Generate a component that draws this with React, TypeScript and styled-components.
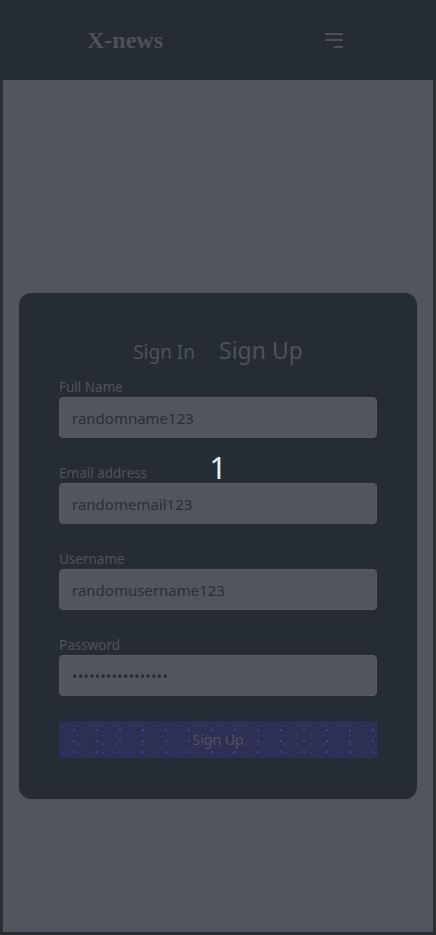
import React from "react";
import styled, { createGlobalStyle } from "styled-components";

const Global = createGlobalStyle`
  html, body { margin: 0; padding: 0; background: #2a2e31; }
  body { font-family: "Noto Sans", "Open Sans", sans-serif; }
  * { box-sizing: border-box; }
`;

const Page = styled.div`
  width: 436px;
  height: 935px;
  display: flex;
  flex-direction: column;
  background: #2a2e31;
  position: relative;
`;

const Header = styled.header`
  height: 80px;
  flex: none;
  background: #262c36;
  display: flex;
  align-items: center;
  justify-content: space-between;
  padding: 0 93px 0 87px;
`;

const Logo = styled.div`
  font-family: "Liberation Serif", "Times New Roman", serif;
  font-weight: 700;
  font-size: 24px;
  color: #4d525a;
`;

const Burger = styled.button`
  width: 18px;
  height: 15px;
  padding: 0;
  border: 0;
  background: transparent;
  display: flex;
  flex-direction: column;
  align-items: flex-end;
  justify-content: space-between;
`;

const Line = styled.span<{ $w: number }>`
  display: block;
  height: 2px;
  width: ${(p) => p.$w}px;
  background: #4d525a;
`;

const Main = styled.main`
  flex: 1;
  margin: 0 3px 3px;
  background: #52555d;
  padding: 213px 16px 0;
`;

const Card = styled.section`
  background: #262c36;
  border-radius: 12px;
  padding: 34px 40px 40px;
  height: 506px;
`;

const Tabs = styled.div`
  display: flex;
  justify-content: center;
  align-items: baseline;
  gap: 24px;
  height: 46px;
  margin-bottom: 6px;
`;

const Tab = styled.span<{ $active?: boolean }>`
  font-size: ${(p) => (p.$active ? "23px" : "19px")};
  color: #4d525a;
  line-height: 46px;
`;

const Field = styled.div`
  display: flex;
  flex-direction: column;
  gap: 2px;
  margin-bottom: 27px;
  &:last-of-type {
    margin-bottom: 25px;
  }
`;

const Label = styled.label`
  font-size: 13.5px;
  line-height: 16px;
  color: #4f535b;
`;

const Input = styled.div`
  height: 41px;
  border-radius: 4px;
  background: #52555d;
  border: 1px solid #575a62;
  color: #2a2f37;
  font-size: 15px;
  display: flex;
  align-items: center;
  padding-left: 12px;
`;

const Button = styled.button`
  width: 100%;
  height: 37px;
  border: 0;
  border-radius: 0;
  background-color: #2e3053;
  background-image:
    radial-gradient(circle at 1px 1px, #3b3da8 0.8px, transparent 1.2px),
    radial-gradient(circle at 1px 1px, #36387c 0.6px, transparent 1px);
  background-size: 23px 11px, 13px 9px;
  background-position: 14px 8px, 4px 4px;
  font-family: "Noto Sans", sans-serif;
  font-size: 14px;
  color: #50535d;
`;

const Overlay = styled.div`
  position: absolute;
  left: 0;
  top: 0;
  width: 436px;
  height: 935px;
  display: flex;
  align-items: center;
  justify-content: center;
  pointer-events: none;
  font-family: "Noto Sans", sans-serif;
  font-size: 30px;
  color: #e8f4f4;
`;

const fields = [
  { label: "Full Name", value: "randomname123" },
  { label: "Email address", value: "randomemail123" },
  { label: "Username", value: "randomusername123" },
  { label: "Password", value: "•••••••••••••••••" },
];

export default function App() {
  return (
    <>
      <Global />
      <Page>
        <Header>
          <Logo>X-news</Logo>
          <Burger aria-label="menu">
            <Line $w={18} />
            <Line $w={18} />
            <Line $w={9} />
          </Burger>
        </Header>
        <Main>
          <Card>
            <Tabs>
              <Tab>Sign In</Tab>
              <Tab $active>Sign Up</Tab>
            </Tabs>
            {fields.map((f) => (
              <Field key={f.label}>
                <Label>{f.label}</Label>
                <Input>{f.value}</Input>
              </Field>
            ))}
            <Button>Sign Up</Button>
          </Card>
        </Main>
        <Overlay>1</Overlay>
      </Page>
    </>
  );
}
